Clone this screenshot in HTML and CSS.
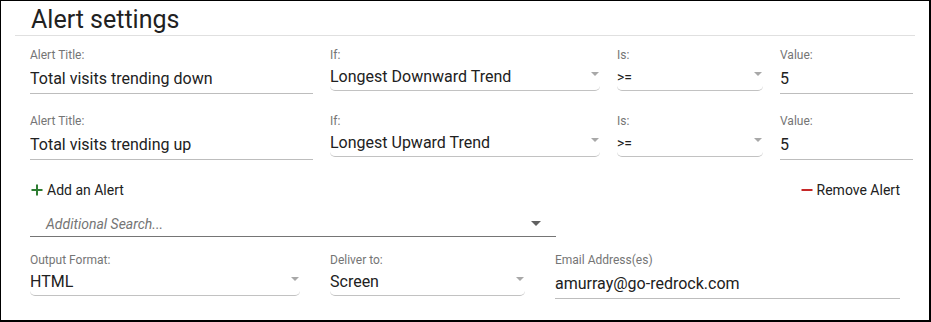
FILE: index.html
```html
<!DOCTYPE html>
<html lang="en">
  <head>
    <meta charset="UTF-8" />
    <meta name="viewport" content="width=device-width, initial-scale=1.0" />
    <title>Alert settings</title>
    <link rel="stylesheet" href="styles.css">
  </head>
  <body>
    <div class="panel">
      <h2 class="panel-title">Alert settings</h2>
      <form class="alert-form">
        <!-- Alert rows -->
        <div class="alert-row">
          <div class="field field-title">
            <label>Alert Title:</label>
            <input type="text" class="text-input" value="Total visits trending down" />
          </div>
          <div class="field field-if">
            <label>If:</label>
            <div class="select"><span>Longest Downward Trend</span><i class="arrow"></i></div>
          </div>
          <div class="field field-is">
            <label>Is:</label>
            <div class="select"><span class="op">&gt;=</span><i class="arrow"></i></div>
          </div>
          <div class="field field-value">
            <label>Value:</label>
            <input type="text" class="text-input" value="5" />
          </div>
        </div>

        <div class="alert-row">
          <div class="field field-title">
            <label>Alert Title:</label>
            <input type="text" class="text-input" value="Total visits trending up" />
          </div>
          <div class="field field-if">
            <label>If:</label>
            <div class="select"><span>Longest Upward Trend</span><i class="arrow"></i></div>
          </div>
          <div class="field field-is">
            <label>Is:</label>
            <div class="select"><span class="op">&gt;=</span><i class="arrow"></i></div>
          </div>
          <div class="field field-value">
            <label>Value:</label>
            <input type="text" class="text-input" value="5" />
          </div>
        </div>

        <div class="alert-actions">
          <a class="action add-alert">
            <svg width="12" height="12" viewBox="0 0 12 12"><path d="M6 0.5v11M0.5 6h11" stroke="#2e7d32" stroke-width="2" fill="none"/></svg>
            Add an Alert
          </a>
          <a class="action remove-alert">
            <svg width="12" height="12" viewBox="0 0 12 12"><path d="M0.5 6h11" stroke="#c62828" stroke-width="2" fill="none"/></svg>
            Remove Alert
          </a>
        </div>

        <div class="search-box">
          <span class="placeholder">Additional Search...</span>
          <i class="arrow dark"></i>
        </div>

        <!-- Output options -->
        <div class="output-row">
          <div class="field field-format">
            <label>Output Format:</label>
            <div class="select"><span>HTML</span><i class="arrow"></i></div>
          </div>
          <div class="field field-deliver">
            <label>Deliver to:</label>
            <div class="select"><span>Screen</span><i class="arrow"></i></div>
          </div>
          <div class="field field-email">
            <label>Email Address(es)</label>
            <input type="text" class="text-input" value="amurray@go-redrock.com" />
          </div>
        </div>
      </form>
    </div>
  </body>
</html>
```

FILE: styles.css
```css
* {
  margin: 0;
  padding: 0;
  box-sizing: border-box;
}

body {
  font-family: Roboto, "Noto Sans", sans-serif;
  background: #fff;
  color: #212121;
}

.panel {
  width: 931px;
  height: 322px;
  border: 1px solid #000;
  border-right-width: 2px;
  border-bottom-width: 2px;
  padding: 0 14px;
}

.panel-title {
  font-size: 25px;
  font-weight: 400;
  line-height: 28px;
  padding: 5px 16px 1px;
  border-bottom: 1px solid #e0e0e0;
}

/* Form */
.alert-form {
  padding: 12px 0 0 15px;
}

.alert-row {
  display: flex;
  gap: 17px;
  margin-bottom: 20px;
}

.field {
  display: flex;
  flex-direction: column;
}

.field label {
  font-size: 12px;
  line-height: 14px;
  color: #757575;
}

.field-title { width: 283px; }
.field-if { width: 270px; }
.field-is { width: 146px; }
.field-value { width: 133px; }

.text-input {
  font-family: inherit;
  font-size: 16px;
  line-height: 20px;
  height: 32px;
  color: #212121;
  padding: 6px 0 5px;
  border: none;
  border-bottom: 1px solid #bdbdbd;
  outline: none;
  background: transparent;
}

.select {
  display: flex;
  justify-content: space-between;
  font-size: 16px;
  line-height: 20px;
  padding: 5px 0 3px;
  border-bottom: 1px solid #c2c2c2;
  border-radius: 0 0 5px 5px;
}

.select .op {
  font-size: 14px;
}

.arrow {
  width: 0;
  height: 0;
  margin: 5px 1px 0 0;
  border-left: 4px solid transparent;
  border-right: 4px solid transparent;
  border-top: 4px solid #a8a8a8;
}

.arrow.dark {
  margin: 7px 0 0;
  border-left-width: 5px;
  border-right-width: 5px;
  border-top: 5px solid #616161;
}

/* Add / remove */
.alert-actions {
  display: flex;
  justify-content: space-between;
  width: 870px;
  font-size: 14px;
  line-height: 20px;
}

.action {
  display: flex;
  align-items: center;
  gap: 4px;
  cursor: pointer;
}

.add-alert svg {
  margin-left: 1px;
}

.search-box {
  display: flex;
  justify-content: space-between;
  align-items: flex-start;
  width: 526px;
  margin-top: 14px;
  padding: 0 15px 2px 16px;
  border-bottom: 1px solid #757575;
}

.placeholder {
  font-size: 14px;
  line-height: 20px;
  font-style: italic;
  color: #757575;
}

.output-row {
  display: flex;
  gap: 30px;
  margin-top: 16px;
}

.field-format { width: 270px; }
.field-deliver { width: 195px; }
.field-email { width: 345px; }
```
